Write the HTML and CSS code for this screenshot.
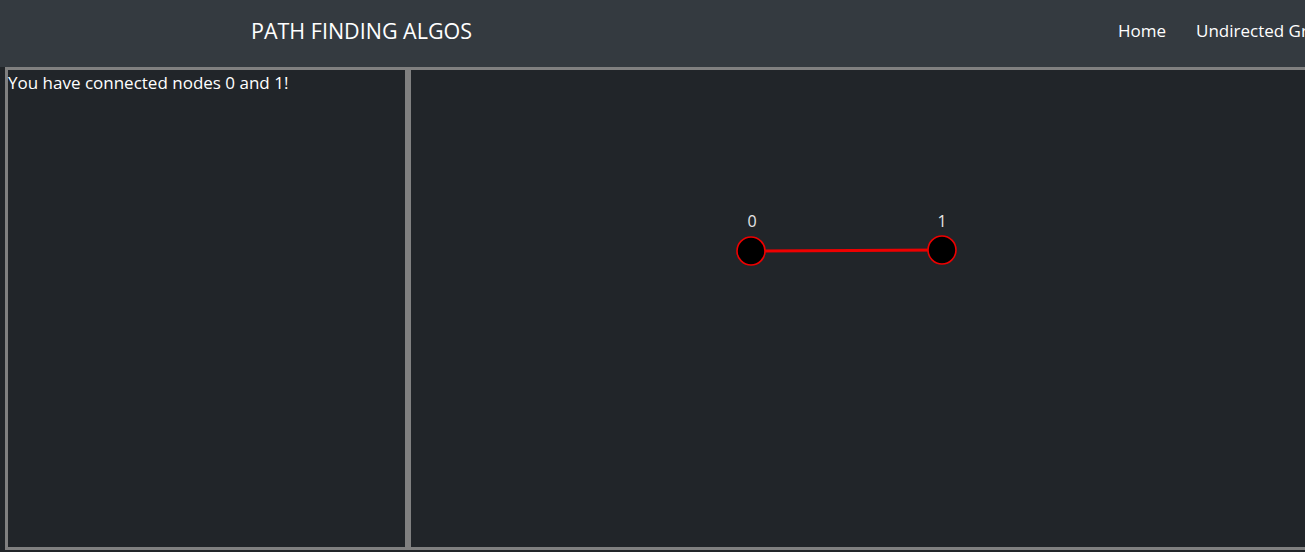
FILE: index.html
```html
<!DOCTYPE html>
<html>
<head>
<meta charset="utf-8">
<link rel="stylesheet" href="styles.css">
</head>
<body>
<nav class="navbar">
  <span class="brand">PATH FINDING ALGOS</span>
  <div class="links">
    <a class="link">Home</a>
    <a class="link">Undirected Graph</a>
    <a class="link">Directed Graph</a>
  </div>
</nav>
<main class="workspace">
  <section class="log">You have connected nodes 0 and 1!</section>
  <section class="canvas">
    <svg class="graph" width="1000" height="477" viewBox="0 0 1000 477">
      <line x1="340" y1="181" x2="531" y2="180" class="edge"/>
      <circle cx="340" cy="181" r="14" class="node"/>
      <circle cx="531" cy="180" r="14" class="node"/>
      <text x="341" y="157" class="label">0</text>
      <text x="531" y="157" class="label">1</text>
    </svg>
  </section>
</main>
</body>
</html>
```
FILE: styles.css
```css
html, body {
  margin: 0;
  padding: 0;
  background: #212529;
  overflow: hidden;
  font-family: "Open Sans", "Noto Sans", sans-serif;
}
.navbar {
  height: 67px;
  background: #343a40;
  display: grid;
  grid-template-columns: 867px auto;
  align-items: center;
  padding-left: 251px;
  box-sizing: border-box;
  width: 1700px;
  color: #fff;
}
.brand {
  font-size: 21.5px;
  padding-bottom: 7px;
}
.links {
  display: flex;
  gap: 30px;
  padding-bottom: 7px;
}
.link {
  font-size: 17px;
  color: #fff;
  white-space: nowrap;
}
.workspace {
  display: flex;
  padding-left: 5px;
  width: 1500px;
}
.log {
  width: 403px;
  height: 483px;
  box-sizing: border-box;
  border: 3px solid #808080;
  color: #fff;
  font-size: 17px;
  line-height: 24px;
  padding: 1px 0 0 0;
}
.canvas {
  width: 1000px;
  height: 483px;
  box-sizing: border-box;
  border: 3px solid #808080;
}
.graph {
  display: block;
}
.edge {
  stroke: #ee0000;
  stroke-width: 3;
}
.node {
  fill: #000;
  stroke: #ee0000;
  stroke-width: 1.6;
}
.label {
  fill: #e6e6e6;
  font-size: 16px;
  text-anchor: middle;
  font-family: "Open Sans", "Noto Sans", sans-serif;
}
```
